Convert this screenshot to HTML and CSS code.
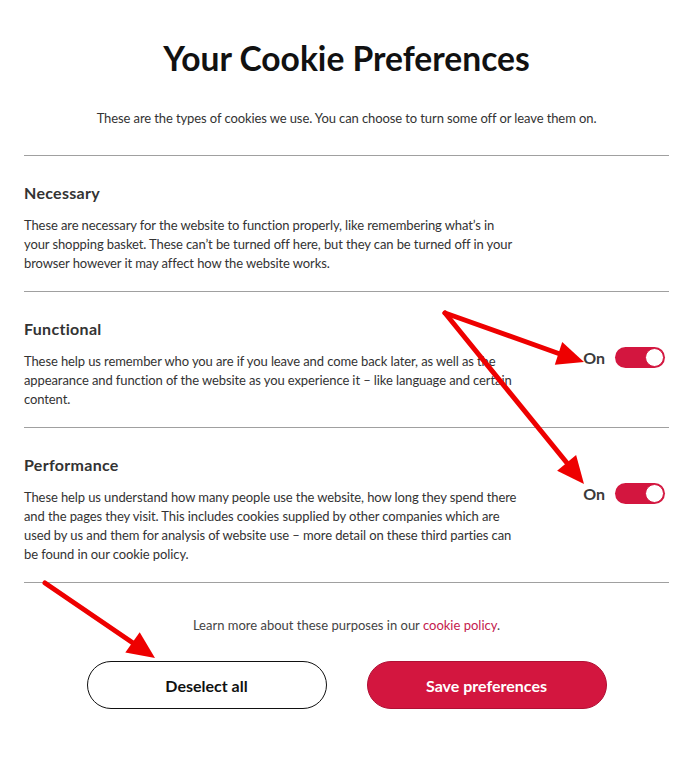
FILE: index.html
```html
<!DOCTYPE html>
<html lang="en">
<head>
<meta charset="utf-8">
<title>Your Cookie Preferences</title>
<link rel="stylesheet" href="styles.css">
</head>
<body>
<main class="prefs">
  <h1 class="title">Your Cookie Preferences</h1>
  <p class="intro">These are the types of cookies we use. You can choose to turn some off or leave them on.</p>

  <section class="group">
    <h2 class="group-title">Necessary</h2>
    <div class="group-body">
      <p class="desc">These are necessary for the website to function properly, like remembering what’s in<br>your shopping basket. These can’t be turned off here, but they can be turned off in your<br>browser however it may affect how the website works.</p>
    </div>
  </section>

  <section class="group">
    <h2 class="group-title">Functional</h2>
    <div class="group-body">
      <p class="desc">These help us remember who you are if you leave and come back later, as well as the<br>appearance and function of the website as you experience it – like language and certain<br>content.</p>
      <div class="toggle-wrap"><span class="toggle-label">On</span><span class="toggle"><span class="knob"></span></span></div>
    </div>
  </section>

  <section class="group">
    <h2 class="group-title">Performance</h2>
    <div class="group-body">
      <p class="desc">These help us understand how many people use the website, how long they spend there<br>and the pages they visit. This includes cookies supplied by other companies which are<br>used by us and them for analysis of website use – more detail on these third parties can<br>be found in our cookie policy.</p>
      <div class="toggle-wrap"><span class="toggle-label">On</span><span class="toggle"><span class="knob"></span></span></div>
    </div>
  </section>

  <p class="learn">Learn more about these purposes in our <a class="link" href="#">cookie policy</a>.</p>

  <div class="actions">
    <button class="btn btn-outline">Deselect all</button>
    <button class="btn btn-primary">Save preferences</button>
  </div>
</main>

<svg class="annotations" width="697" height="763" viewBox="0 0 697 763" aria-hidden="true">
  <g stroke="#ee0000" stroke-width="5" stroke-linecap="round" fill="none">
    <line x1="445" y1="313" x2="560" y2="354"/>
    <line x1="445" y1="313" x2="567" y2="463"/>
    <line x1="45" y1="583" x2="133" y2="643"/>
  </g>
  <g fill="#ee0000">
    <polygon points="584,362 554.8,364.7 562.2,341.9"/>
    <polygon points="584,484 557.1,470.7 576.1,454.9"/>
    <polygon points="155,658 125.3,652.5 139.7,632.3"/>
  </g>
</svg>
</body>
</html>
```

FILE: styles.css
```css
* { box-sizing: border-box; }

html, body {
  margin: 0;
  padding: 0;
  background: #ffffff;
}

body {
  font-family: Lato, "Open Sans", Arial, sans-serif;
  color: #333333;
  position: relative;
  width: 697px;
  min-height: 763px;
}

.prefs {
  padding: 38px 28px 0 24px;
  display: flex;
  flex-direction: column;
}

.title {
  margin: 0;
  text-align: center;
  font-size: 33.6px;
  line-height: 40px;
  font-weight: 700;
  color: #111111;
}

.intro {
  margin: 31px 0 0;
  text-align: center;
  font-size: 13px;
  line-height: 19px;
  letter-spacing: -0.1px;
  color: #333333;
  padding-bottom: 27px;
  border-bottom: 1px solid #a0a0a0;
}

.group {
  padding: 26px 0 18px;
  border-bottom: 1px solid #a0a0a0;
}

.group-title {
  margin: 0;
  font-size: 16px;
  line-height: 22px;
  font-weight: 700;
  color: #333333;
  letter-spacing: 0.3px;
}

.group-body {
  margin-top: 12px;
  display: flex;
  justify-content: space-between;
  align-items: flex-start;
}

.desc {
  margin: 0;
  width: 525px;
  font-size: 13px;
  line-height: 19px;
  letter-spacing: -0.1px;
  color: #333333;
}

.toggle-wrap {
  display: flex;
  align-items: center;
  gap: 10px;
  margin-top: -5px;
  margin-right: 4px;
}

.toggle-label {
  font-size: 16px;
  font-weight: 700;
  color: #3a3a3a;
}

.toggle {
  width: 50px;
  height: 21px;
  border-radius: 11px;
  background: #d3163f;
  display: flex;
  justify-content: flex-end;
  align-items: center;
  padding: 0 1px;
}

.knob {
  width: 19px;
  height: 19px;
  border-radius: 50%;
  background: #ffffff;
  border: 1px solid #d3163f;
}

.learn {
  margin: 33px 0 0;
  text-align: center;
  font-size: 13px;
  line-height: 19px;
  color: #444444;
}

.link {
  color: #c4204d;
  text-decoration: none;
}

.actions {
  margin-top: 26px;
  display: flex;
  justify-content: center;
  gap: 40px;
}

.btn {
  width: 240px;
  height: 48px;
  border-radius: 24px;
  font-family: Lato, "Open Sans", Arial, sans-serif;
  font-size: 16px;
  font-weight: 700;
  cursor: pointer;
}

.btn-outline {
  background: #ffffff;
  color: #111111;
  border: 1px solid #111111;
}

.btn-primary {
  background: #d3163f;
  color: #ffffff;
  border: 1px solid #b01034;
}

.annotations {
  position: absolute;
  left: 0;
  top: 0;
  pointer-events: none;
}
```
